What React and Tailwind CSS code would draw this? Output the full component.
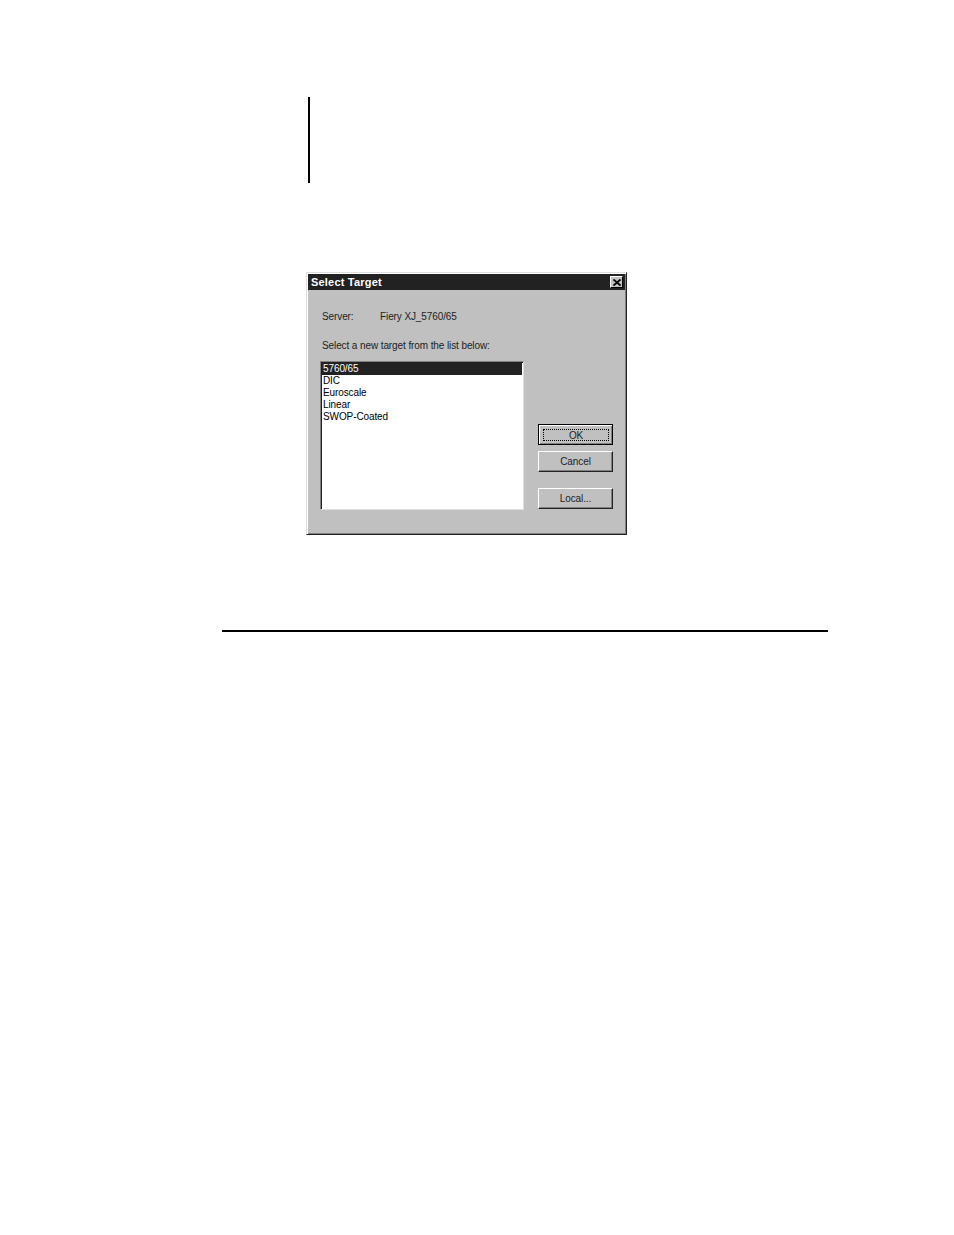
export default function App() {
  const items = ["5760/65", "DIC", "Euroscale", "Linear", "SWOP-Coated"];
  const font = { fontFamily: '"Liberation Sans", Arial, sans-serif' };
  const btn =
    "w-[75px] h-[21px] flex items-center justify-center bg-[#c0c0c0] text-[10px] text-[#222] border-t border-l border-t-white border-l-white border-r border-b border-r-[#222] border-b-[#222] shadow-[inset_-1px_-1px_0_#808080]";
  return (
    <div className="w-[954px] h-[1235px] bg-white relative overflow-hidden" style={font}>
      <div className="pt-[97px]">
        <div className="ml-[308px] w-[1.5px] h-[86px] bg-black" />
        <div className="mt-[89px] ml-[306px] w-[321px] h-[263px] bg-[#c0c0c0] border border-t-[#dfdfdf] border-l-[#dfdfdf] border-r-[#222] border-b-[#222] shadow-[inset_1px_1px_0_#fff,inset_-1px_-1px_0_#808080] p-[1px]">
          <div className="h-[16px] bg-[#222] flex items-center justify-between pl-[3px] pr-[2px]">
            <span className="text-white font-bold text-[11px] leading-none tracking-[0.2px]">Select Target</span>
            <div className="w-[13px] h-[12px] bg-[#c0c0c0] flex items-center justify-center border-t border-l border-t-white border-l-white border-r border-b border-r-black border-b-black">
              <svg width="8" height="7" viewBox="0 0 8 7">
                <path d="M0.5 0.5 L7.5 6.5 M7.5 0.5 L0.5 6.5" stroke="#000" strokeWidth="1.8" />
              </svg>
            </div>
          </div>
          <div className="pl-[12px] pt-[20px] text-[10px] text-[#222] leading-[13px] tracking-[-0.1px]">
            <div className="flex pl-[2px]">
              <span className="w-[58px]">Server:</span>
              <span>Fiery XJ_5760/65</span>
            </div>
            <div className="mt-[16px] pl-[2px]">Select a new target from the list below:</div>
            <div className="flex mt-[9px]">
              <div className="w-[204px] h-[149px] bg-white border-t border-l border-t-[#808080] border-l-[#808080] border-r border-b border-r-[#dfdfdf] border-b-[#dfdfdf] shadow-[inset_1px_1px_0_#222] pt-[1px] pl-[1px] pr-[1px]">
                {items.map((it, i) => (
                  <div
                    key={it}
                    className={
                      i === 0
                        ? "h-[12px] leading-[12px] pl-[1px] bg-[#222] text-white"
                        : "h-[12px] leading-[12px] pl-[1px] text-black"
                    }
                  >
                    {it}
                  </div>
                ))}
              </div>
              <div className="ml-[14px] pt-[63px] flex flex-col">
                <div className="w-[75px] h-[21px] border border-black p-0">
                  <div className="w-full h-full flex items-center justify-center bg-[#c0c0c0] text-[10px] text-[#222] border-t border-l border-t-white border-l-white shadow-[inset_-1px_-1px_0_#808080] relative">
                    <div className="absolute left-[3px] top-[3px] right-[3px] bottom-[3px] border border-dotted border-black" />
                    OK
                  </div>
                </div>
                <div className={btn + " mt-[6px]"}>Cancel</div>
                <div className={btn + " mt-[16px]"}>Local...</div>
              </div>
            </div>
          </div>
        </div>
        <div className="mt-[95px] ml-[222px] w-[606px] h-[1.5px] bg-black" />
      </div>
    </div>
  );
}
